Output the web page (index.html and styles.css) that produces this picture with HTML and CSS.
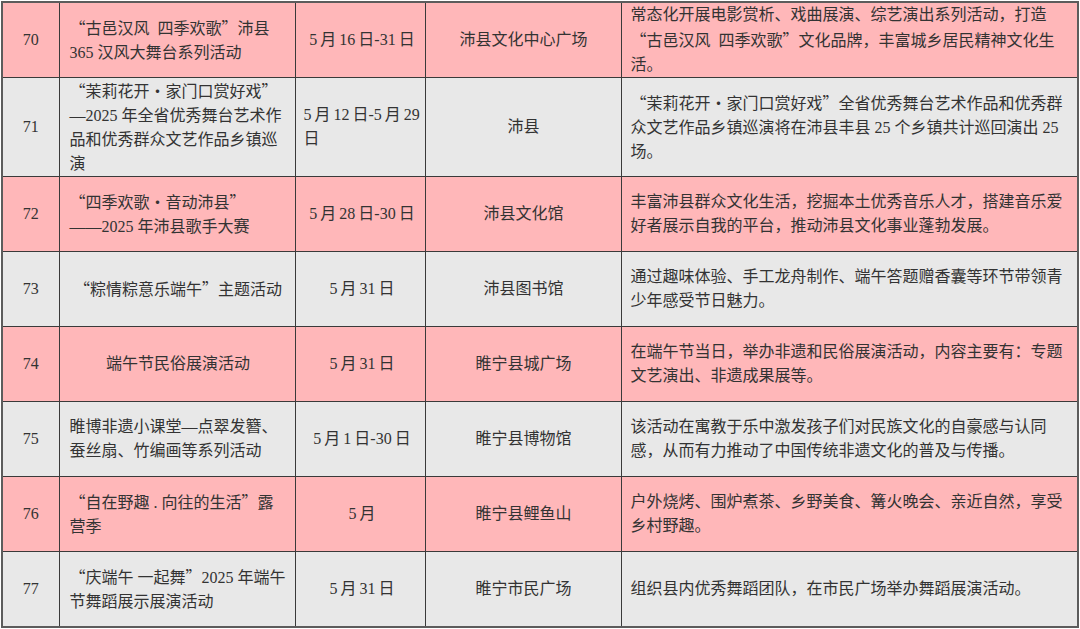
FILE: index.html
```html
<!DOCTYPE html>
<html lang="zh-CN">
<head>
<meta charset="utf-8">
<title>活动安排</title>
<link rel="stylesheet" href="styles.css">
</head>
<body>
<table class="schedule">
  <colgroup>
    <col class="c-no">
    <col class="c-name">
    <col class="c-date">
    <col class="c-place">
    <col class="c-desc">
  </colgroup>
  <tbody>
    <tr class="pink">
      <td class="no">70</td>
      <td class="name"><span class="q">“</span>古邑汉风 &nbsp;四季欢歌<span class="q">”</span>沛县 365 汉风大舞台系列活动</td>
      <td class="date">5 月 16 日-31 日</td>
      <td class="place">沛县文化中心广场</td>
      <td class="desc">常态化开展电影赏析、戏曲展演、综艺演出系列活动，打造<wbr><span class="q">“</span>古邑汉风 &nbsp;四季欢歌<span class="q">”</span>文化品牌，丰富城乡居民精神文化生活。</td>
    </tr>
    <tr class="gray">
      <td class="no">71</td>
      <td class="name"><span class="q">“</span>茉莉花开<span class="q">·</span>家门口赏好戏<span class="q">”</span><br>—2025 年全省优秀舞台艺术作品和优秀群众文艺作品乡镇巡演</td>
      <td class="date left"><span class="nw">5 月 12 日-5 月 29</span><br>日</td>
      <td class="place">沛县</td>
      <td class="desc"><span class="q">“</span>茉莉花开<span class="q">·</span>家门口赏好戏<span class="q">”</span>全省优秀舞台艺术作品和优秀群众文艺作品乡镇巡演将在沛县丰县 25 个乡镇共计巡回演出 25 场。</td>
    </tr>
    <tr class="pink">
      <td class="no">72</td>
      <td class="name"><span class="q">“</span>四季欢歌<span class="q">·</span>音动沛县<span class="q">”</span><br>——2025 年沛县歌手大赛</td>
      <td class="date">5 月 28 日-30 日</td>
      <td class="place">沛县文化馆</td>
      <td class="desc">丰富沛县群众文化生活，挖掘本土优秀音乐人才，搭建音乐爱好者展示自我的平台，推动沛县文化事业蓬勃发展。</td>
    </tr>
    <tr class="gray">
      <td class="no">73</td>
      <td class="name center"><span class="q">“</span>粽情粽意乐端午<span class="q">”</span>主题活动</td>
      <td class="date">5 月 31 日</td>
      <td class="place">沛县图书馆</td>
      <td class="desc">通过趣味体验、手工龙舟制作、端午答题赠香囊等环节带领青少年感受节日魅力。</td>
    </tr>
    <tr class="pink">
      <td class="no">74</td>
      <td class="name center">端午节民俗展演活动</td>
      <td class="date">5 月 31 日</td>
      <td class="place">睢宁县城广场</td>
      <td class="desc">在端午节当日，举办非遗和民俗展演活动，内容主要有：专题文艺演出、非遗成果展等。</td>
    </tr>
    <tr class="gray">
      <td class="no">75</td>
      <td class="name">睢博非遗小课堂—点翠发簪、蚕丝扇、竹编画等系列活动</td>
      <td class="date">5 月 1 日-30 日</td>
      <td class="place">睢宁县博物馆</td>
      <td class="desc">该活动在寓教于乐中激发孩子们对民族文化的自豪感与认同感，从而有力推动了中国传统非遗文化的普及与传播。</td>
    </tr>
    <tr class="pink">
      <td class="no">76</td>
      <td class="name"><span class="q">“</span>自在野趣 . 向往的生活<span class="q">”</span>露营季</td>
      <td class="date">5 月</td>
      <td class="place">睢宁县鲤鱼山</td>
      <td class="desc">户外烧烤、围炉煮茶、乡野美食、篝火晚会、亲近自然，享受乡村野趣。</td>
    </tr>
    <tr class="gray">
      <td class="no">77</td>
      <td class="name"><span class="q">“</span>庆端午 一起舞<span class="q">”</span>2025 年端午节舞蹈展示展演活动</td>
      <td class="date">5 月 31 日</td>
      <td class="place">睢宁市民广场</td>
      <td class="desc">组织县内优秀舞蹈团队，在市民广场举办舞蹈展演活动。</td>
    </tr>
  </tbody>
</table>
</body>
</html>
```
FILE: styles.css
```css
html, body {
  margin: 0;
  padding: 0;
  background: #ffffff;
}

body {
  padding: 1px 0 0 1px;
  font-family: "Liberation Serif", "Noto Sans CJK SC", serif;
  font-size: 16px;
  line-height: 24px;
  color: #333333;
}

.schedule {
  width: 1076px;
  table-layout: fixed;
  border-collapse: collapse;
  border: 2px solid #5c5c5c;
}

.c-no { width: 57px; }
.c-name { width: 236px; }
.c-date { width: 130px; }
.c-place { width: 196px; }
.c-desc { width: 457px; }

.schedule tr {
  height: 75px;
}

.schedule td {
  border: 1px solid #3a3a3a;
  padding: 0 8px 0 9px;
  vertical-align: middle;
  text-align: left;
  word-break: normal;
  line-break: strict;
}

.pink td { background: #ffb7b9; }
.gray td { background: #e8e8e8; }

.schedule td.no { text-align: center; padding: 0; }
.schedule td.name { padding: 0 8px 0 10px; }
.schedule td.date {
  text-align: center;
  padding: 0 4px 0 8px;
  word-spacing: -1px;
}
.schedule td.place { text-align: center; }
.schedule td.center { text-align: center; }
.schedule td.left { text-align: left; }

.nw { white-space: nowrap; }

.q {
  font-family: "Noto Sans CJK SC", sans-serif;
  font-feature-settings: "fwid";
}
```
